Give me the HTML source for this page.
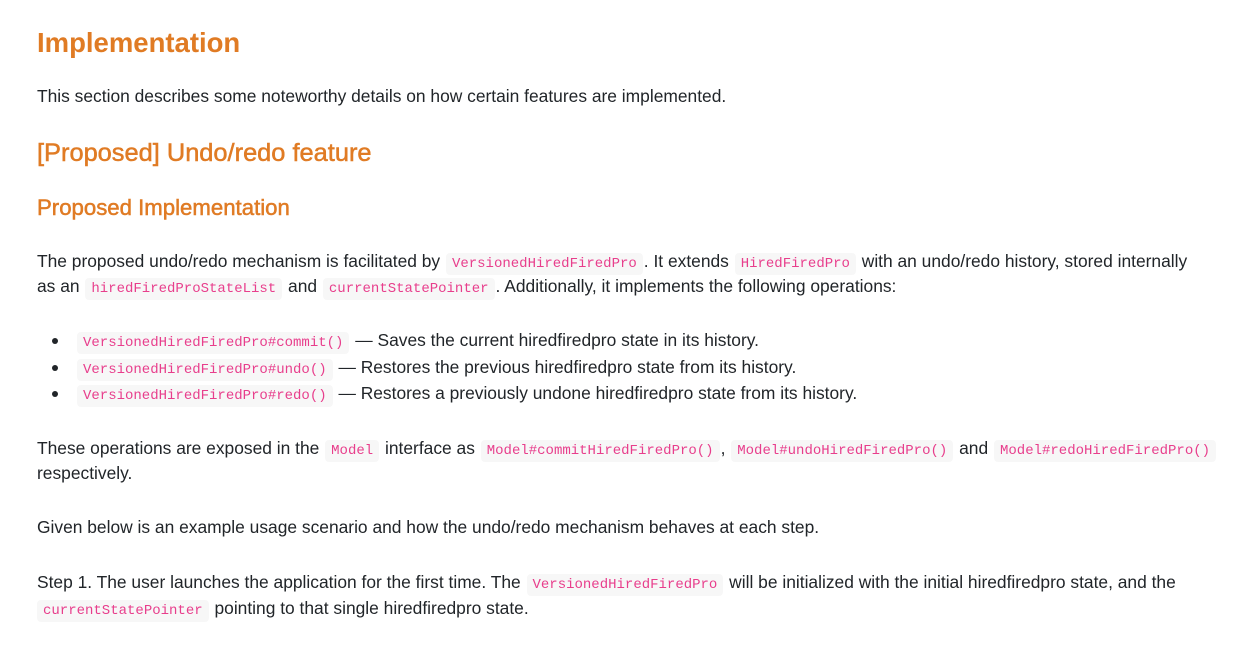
<!DOCTYPE html>
<html><head><meta charset="utf-8"><style>
body{margin:0;background:#fff;width:1259px;height:667px;overflow:hidden;font-family:"Liberation Sans",sans-serif;color:#212529;}
.l{position:absolute;left:37px;white-space:nowrap;font-size:17.4px;line-height:20px;}
h1,h2,h3{position:absolute;left:37px;margin:0;color:#e07b24;white-space:nowrap;}
h1{font-size:27.5px;font-weight:bold;top:27px}
h2{font-size:25.4px;font-weight:normal;top:139px;-webkit-text-stroke:0.5px #e07b24}
h3{font-size:22.2px;font-weight:normal;top:195px;-webkit-text-stroke:0.5px #e07b24}
code{font-family:"Liberation Mono",monospace;font-size:14px;color:#e83e8c;background:#f7f7f7;border-radius:4px;padding:3px 6px;margin:0 1px;}
.b{position:absolute;left:52px;width:6px;height:6px;border-radius:50%;background:#212529}
</style></head><body>
<h1>Implementation</h1>
<div class="l" style="top:86px">This section describes some noteworthy details on how certain features are implemented.</div>
<h2>[Proposed] Undo/redo feature</h2>
<h3>Proposed Implementation</h3>
<div class="l" style="top:251px">The proposed undo/redo mechanism is facilitated by <code>VersionedHiredFiredPro</code>. It extends <code>HiredFiredPro</code> with an undo/redo history, stored internally</div>
<div class="l" style="top:276px">as an <code>hiredFiredProStateList</code> and <code>currentStatePointer</code>. Additionally, it implements the following operations:</div>
<div class="b" style="top:338px"></div>
<div class="l" style="left:76px;top:330px"><code>VersionedHiredFiredPro#commit()</code> — Saves the current hiredfiredpro state in its history.</div>
<div class="b" style="top:365px"></div>
<div class="l" style="left:76px;top:357px"><code>VersionedHiredFiredPro#undo()</code> — Restores the previous hiredfiredpro state from its history.</div>
<div class="b" style="top:391px"></div>
<div class="l" style="left:76px;top:383px"><code>VersionedHiredFiredPro#redo()</code> — Restores a previously undone hiredfiredpro state from its history.</div>
<div class="l" style="top:438px">These operations are exposed in the <code>Model</code> interface as <code>Model#commitHiredFiredPro()</code>, <code>Model#undoHiredFiredPro()</code> and <code>Model#redoHiredFiredPro()</code></div>
<div class="l" style="top:463px">respectively.</div>
<div class="l" style="top:517px">Given below is an example usage scenario and how the undo/redo mechanism behaves at each step.</div>
<div class="l" style="top:572px">Step 1. The user launches the application for the first time. The <code>VersionedHiredFiredPro</code> will be initialized with the initial hiredfiredpro state, and the</div>
<div class="l" style="top:598px"><code style="margin-left:0">currentStatePointer</code> pointing to that single hiredfiredpro state.</div>
</body></html>
